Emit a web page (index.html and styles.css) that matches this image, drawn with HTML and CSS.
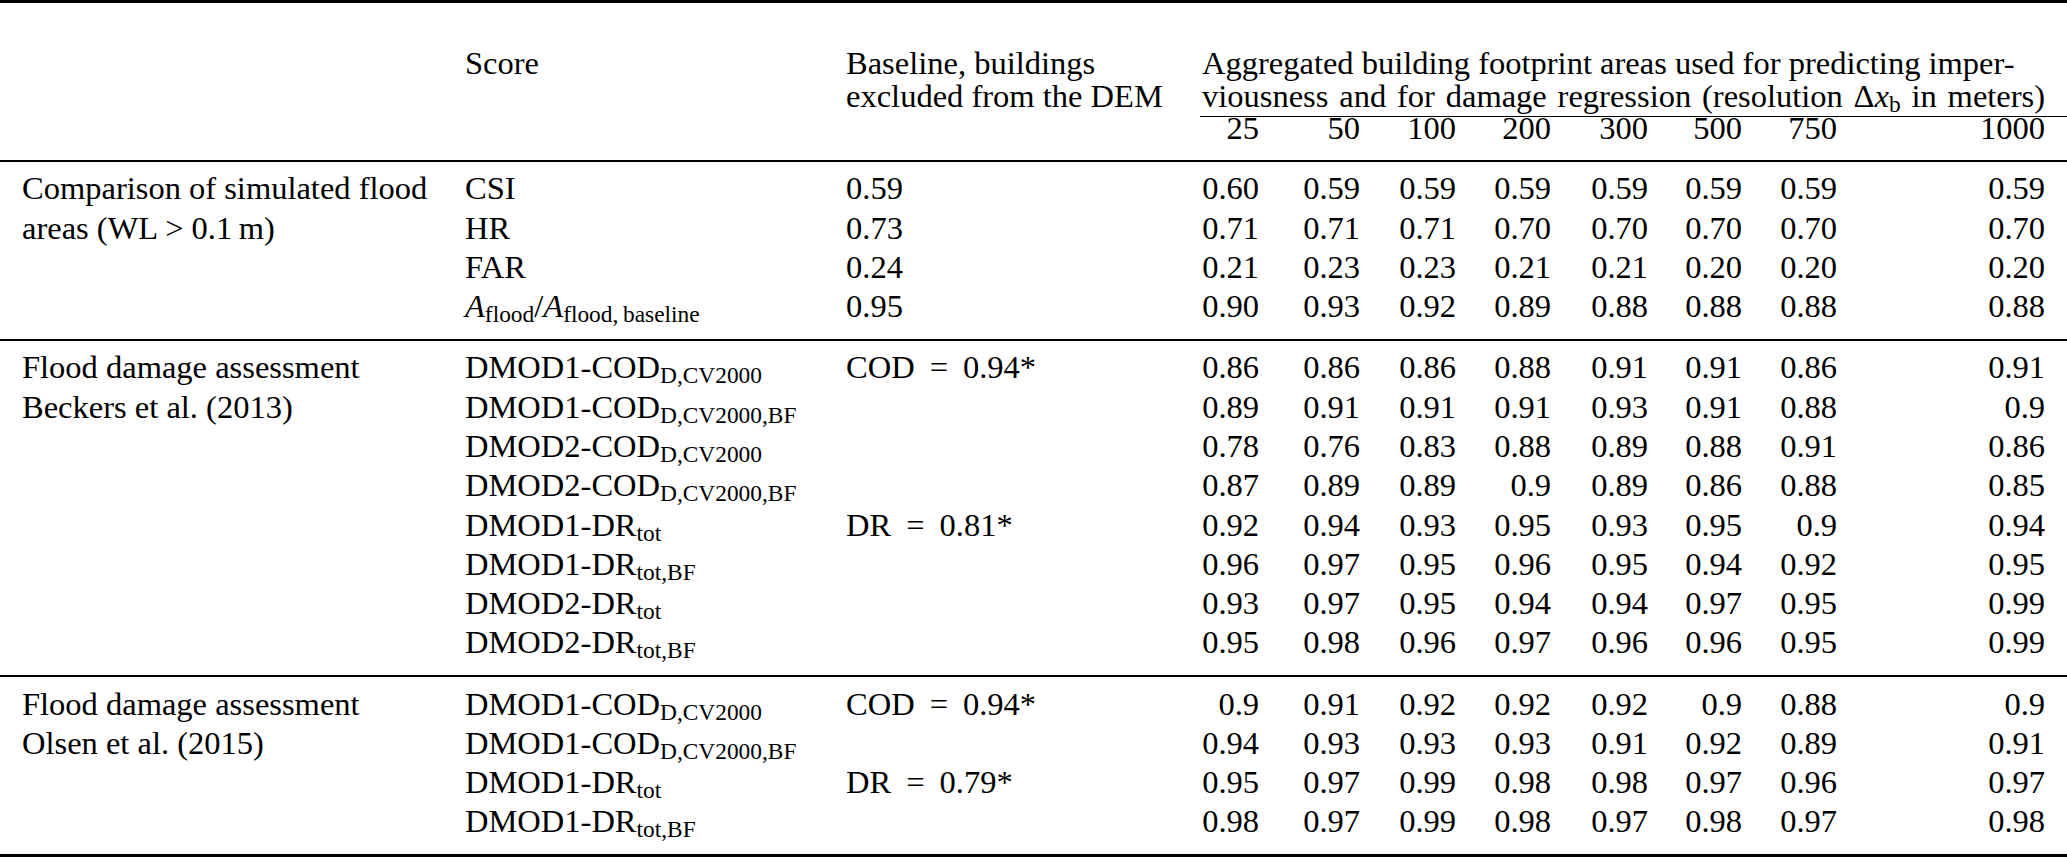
FILE: index.html
```html
<!DOCTYPE html>
<html lang="en">
<head>
<meta charset="utf-8">
<title>Flood simulation scores</title>
<link rel="stylesheet" href="styles.css">
</head>
<body>
<table class="tbl">
  <colgroup>
    <col class="c-group"><col class="c-score"><col class="c-base">
    <col class="c-n1"><col class="c-n2"><col class="c-n3"><col class="c-n4">
    <col class="c-n5"><col class="c-n6"><col class="c-n7"><col class="c-n8">
  </colgroup>
  <thead>
    <tr class="h1">
      <th class="lab"></th>
      <th class="score">Score</th>
      <th class="base">Baseline, buildings<br>excluded from the DEM</th>
      <th class="agg" colspan="8"><span class="agg-line">Aggregated building footprint areas used for predicting imper-</span><span class="agg-line just">viousness and for damage regression (resolution &Delta;<i>x</i><sub>b</sub> in meters)</span></th>
    </tr>
    <tr class="h2">
      <th class="lab"></th><th class="score"></th><th class="base"></th>
      <th class="num">25</th><th class="num">50</th><th class="num">100</th><th class="num">200</th>
      <th class="num">300</th><th class="num">500</th><th class="num">750</th><th class="num last">1000</th>
    </tr>
  </thead>
  <tbody>
    <tr class="first">
      <td class="lab" rowspan="4">Comparison of simulated flood<br>areas (WL &gt; 0.1&#8201;m)</td>
      <td class="score">CSI</td><td class="base">0.59</td>
      <td class="num">0.60</td><td class="num">0.59</td><td class="num">0.59</td><td class="num">0.59</td><td class="num">0.59</td><td class="num">0.59</td><td class="num">0.59</td><td class="num last">0.59</td>
    </tr>
    <tr>
      <td class="score">HR</td><td class="base">0.73</td>
      <td class="num">0.71</td><td class="num">0.71</td><td class="num">0.71</td><td class="num">0.70</td><td class="num">0.70</td><td class="num">0.70</td><td class="num">0.70</td><td class="num last">0.70</td>
    </tr>
    <tr>
      <td class="score">FAR</td><td class="base">0.24</td>
      <td class="num">0.21</td><td class="num">0.23</td><td class="num">0.23</td><td class="num">0.21</td><td class="num">0.21</td><td class="num">0.20</td><td class="num">0.20</td><td class="num last">0.20</td>
    </tr>
    <tr class="final">
      <td class="score"><i>A</i><sub>flood</sub>/<i>A</i><sub>flood,&#8201;baseline</sub></td><td class="base">0.95</td>
      <td class="num">0.90</td><td class="num">0.93</td><td class="num">0.92</td><td class="num">0.89</td><td class="num">0.88</td><td class="num">0.88</td><td class="num">0.88</td><td class="num last">0.88</td>
    </tr>
  </tbody>
  <tbody class="sect">
    <tr class="first">
      <td class="lab" rowspan="8">Flood damage assessment<br>Beckers et al. (2013)</td>
      <td class="score">DMOD1-COD<sub>D,CV2000</sub></td><td class="base">COD<span class="eq">=</span>0.94*</td>
      <td class="num">0.86</td><td class="num">0.86</td><td class="num">0.86</td><td class="num">0.88</td><td class="num">0.91</td><td class="num">0.91</td><td class="num">0.86</td><td class="num last">0.91</td>
    </tr>
    <tr>
      <td class="score">DMOD1-COD<sub>D,CV2000,BF</sub></td><td class="base"></td>
      <td class="num">0.89</td><td class="num">0.91</td><td class="num">0.91</td><td class="num">0.91</td><td class="num">0.93</td><td class="num">0.91</td><td class="num">0.88</td><td class="num last">0.9</td>
    </tr>
    <tr>
      <td class="score">DMOD2-COD<sub>D,CV2000</sub></td><td class="base"></td>
      <td class="num">0.78</td><td class="num">0.76</td><td class="num">0.83</td><td class="num">0.88</td><td class="num">0.89</td><td class="num">0.88</td><td class="num">0.91</td><td class="num last">0.86</td>
    </tr>
    <tr>
      <td class="score">DMOD2-COD<sub>D,CV2000,BF</sub></td><td class="base"></td>
      <td class="num">0.87</td><td class="num">0.89</td><td class="num">0.89</td><td class="num">0.9</td><td class="num">0.89</td><td class="num">0.86</td><td class="num">0.88</td><td class="num last">0.85</td>
    </tr>
    <tr>
      <td class="score">DMOD1-DR<sub>tot</sub></td><td class="base">DR<span class="eq">=</span>0.81*</td>
      <td class="num">0.92</td><td class="num">0.94</td><td class="num">0.93</td><td class="num">0.95</td><td class="num">0.93</td><td class="num">0.95</td><td class="num">0.9</td><td class="num last">0.94</td>
    </tr>
    <tr>
      <td class="score">DMOD1-DR<sub>tot,BF</sub></td><td class="base"></td>
      <td class="num">0.96</td><td class="num">0.97</td><td class="num">0.95</td><td class="num">0.96</td><td class="num">0.95</td><td class="num">0.94</td><td class="num">0.92</td><td class="num last">0.95</td>
    </tr>
    <tr>
      <td class="score">DMOD2-DR<sub>tot</sub></td><td class="base"></td>
      <td class="num">0.93</td><td class="num">0.97</td><td class="num">0.95</td><td class="num">0.94</td><td class="num">0.94</td><td class="num">0.97</td><td class="num">0.95</td><td class="num last">0.99</td>
    </tr>
    <tr class="final">
      <td class="score">DMOD2-DR<sub>tot,BF</sub></td><td class="base"></td>
      <td class="num">0.95</td><td class="num">0.98</td><td class="num">0.96</td><td class="num">0.97</td><td class="num">0.96</td><td class="num">0.96</td><td class="num">0.95</td><td class="num last">0.99</td>
    </tr>
  </tbody>
  <tbody class="sect">
    <tr class="first">
      <td class="lab" rowspan="4">Flood damage assessment<br>Olsen et al. (2015)</td>
      <td class="score">DMOD1-COD<sub>D,CV2000</sub></td><td class="base">COD<span class="eq">=</span>0.94*</td>
      <td class="num">0.9</td><td class="num">0.91</td><td class="num">0.92</td><td class="num">0.92</td><td class="num">0.92</td><td class="num">0.9</td><td class="num">0.88</td><td class="num last">0.9</td>
    </tr>
    <tr>
      <td class="score">DMOD1-COD<sub>D,CV2000,BF</sub></td><td class="base"></td>
      <td class="num">0.94</td><td class="num">0.93</td><td class="num">0.93</td><td class="num">0.93</td><td class="num">0.91</td><td class="num">0.92</td><td class="num">0.89</td><td class="num last">0.91</td>
    </tr>
    <tr>
      <td class="score">DMOD1-DR<sub>tot</sub></td><td class="base">DR<span class="eq">=</span>0.79*</td>
      <td class="num">0.95</td><td class="num">0.97</td><td class="num">0.99</td><td class="num">0.98</td><td class="num">0.98</td><td class="num">0.97</td><td class="num">0.96</td><td class="num last">0.97</td>
    </tr>
    <tr class="final">
      <td class="score">DMOD1-DR<sub>tot,BF</sub></td><td class="base"></td>
      <td class="num">0.98</td><td class="num">0.97</td><td class="num">0.99</td><td class="num">0.98</td><td class="num">0.97</td><td class="num">0.98</td><td class="num">0.97</td><td class="num last">0.98</td>
    </tr>
  </tbody>
</table>
</body>
</html>
```
FILE: styles.css
```css
html, body {
  margin: 0;
  padding: 0;
  background: #ffffff;
}

body {
  font-family: "Liberation Serif", "Times New Roman", serif;
  font-size: 32.5px;
  color: #000000;
}

.tbl {
  width: 2067px;
  table-layout: fixed;
  border-collapse: separate;
  border-spacing: 0;
  border-top: 3px solid #000;
  border-bottom: 3px solid #000;
}

.c-group { width: 445px; }
.c-score { width: 381px; }
.c-base  { width: 374px; }
.c-n1 { width: 79px; }
.c-n2 { width: 101px; }
.c-n3 { width: 96px; }
.c-n4 { width: 95px; }
.c-n5 { width: 97px; }
.c-n6 { width: 94px; }
.c-n7 { width: 95px; }
.c-n8 { width: 210px; }

th, td {
  font-weight: normal;
  text-align: left;
  vertical-align: top;
  padding: 0;
  white-space: nowrap;
  line-height: 39.3px;
}

.lab { padding-left: 22px; }
.score { padding-left: 20px; }
.base { padding-left: 20px; }
.num { text-align: right; padding-right: 20px; }
.num.last { padding-right: 22px; }

.eq { padding: 0 15px; }

/* header */
.h1 th {
  line-height: 33px;
  padding-top: 44px;
  padding-bottom: 3px;
}
.h1 .agg {
  padding-left: 2px;
  padding-right: 22px;
  border-bottom: 1px solid #000;
}
.agg-line { display: block; }
.agg-line.just {
  text-align: justify;
  text-align-last: justify;
  white-space: normal;
}
.h2 th {
  line-height: 22px;
  padding-top: 0;
  padding-bottom: 21px;
  border-bottom: 2px solid #000;
}

/* body sections */
tr.first td { padding-top: 7.4px; }
tr.final td { padding-bottom: 12.4px; }
.sect tr.first td { border-top: 2px solid #000; }

sub {
  font-size: 0.72em;
  line-height: 0;
  vertical-align: -0.22em;
}

i { font-style: italic; }
```
